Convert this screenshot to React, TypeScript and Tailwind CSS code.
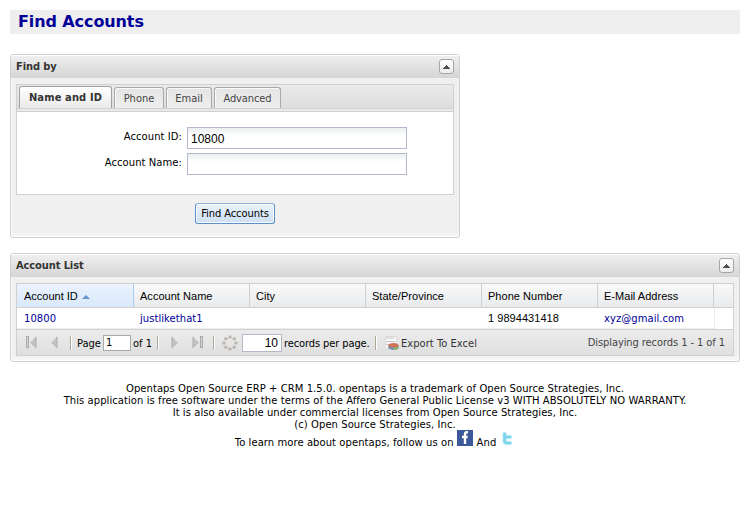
import React from 'react';

const verdana = "font-['DejaVu_Sans',sans-serif]";
const tahoma = "font-['DejaVu_Sans_Condensed','DejaVu_Sans',sans-serif] [font-stretch:condensed]";
const arial = "font-['Liberation_Sans',sans-serif]";

function Collapse() {
  return (
    <span className="flex h-[15px] w-[15px] items-center justify-center rounded-[3px] border border-[#a6a6a6] bg-gradient-to-b from-white to-[#ececec]">
      <svg width="7" height="4" viewBox="0 0 7 4" shapeRendering="crispEdges">
        <path d="M3 0h1v1h1v1h1v1h1v1H0V3h1V2h1V1h1z" fill="#505050" />
      </svg>
    </span>
  );
}

function Panel({ title, className, children }: { title: string; className: string; children: React.ReactNode }) {
  return (
    <section className={`rounded-[3px] border border-[#d0d0d0] bg-[#f0f0f0] shadow-[inset_1px_0_0_#fafafa,inset_0_-1px_0_#fff,inset_0_-4px_0_#f5f5f5] ${className}`}>
      <header className="flex h-[23px] items-center justify-between rounded-t-[2px] border-t border-white bg-gradient-to-b from-[#efefef] to-[#d5d5d5] px-[5px]">
        <h2 className={`${tahoma} text-[11px] leading-[14px] font-bold tracking-[-0.1px] whitespace-nowrap text-[#333]`}>{title}</h2>
        <span className="-mt-px"><Collapse /></span>
      </header>
      {children}
    </section>
  );
}

function Tab({ label, className }: { label: string; className: string }) {
  return (
    <div className={`flex h-[21px] items-center justify-center rounded-t-[3px] border border-b-0 border-[#a9a9a9] bg-gradient-to-b from-[#e4e4e4] to-[#eeeeee] pt-[2px] text-[11px] whitespace-nowrap text-[#444] shadow-[inset_1px_1px_0_#fafafa] ${tahoma} ${className}`}>
      {label}
    </div>
  );
}

function Field({ label, value }: { label: string; value?: string }) {
  return (
    <div className="flex h-[22px]">
      <label className={`${verdana} w-[165px] pt-[4px] text-right text-[10px] leading-[12px] tracking-[0.06px] whitespace-nowrap text-black`}>{label}</label>
      <div className={`${arial} ml-[5px] h-[22px] w-[220px] border border-[#b5b8c8] bg-gradient-to-b from-[#eceff0] to-white to-40% pl-[3px] text-[12px] leading-[22px] text-black`}>{value}</div>
    </div>
  );
}

function Separator({ className }: { className: string }) {
  return <span className={`h-[14px] w-px shrink-0 bg-[#aca899] shadow-[1px_0_0_white] ${className}`} />;
}

function PageArrow({ flip, bar, className }: { flip?: boolean; bar?: boolean; className: string }) {
  return (
    <svg className={`shrink-0 ${className}`} width="11" height="13" viewBox="0 0 11 13">
      <g transform={flip ? 'translate(11 0) scale(-1 1)' : undefined}>
        {bar && <rect x="0.5" y="0.5" width="2" height="11" fill="#d5d5d5" stroke="#a9a9a9" />}
        <path d={bar ? 'M10 .8v10.8L4.6 6.2z' : 'M8 .8v10.8L2.6 6.2z'} fill="#c4c4c4" />
        <path d={bar ? 'M10 .8v10.8L4.6 6.2' : 'M8 .8v10.8L2.6 6.2'} fill="none" stroke="#a6a6a6" strokeWidth=".9" />
      </g>
    </svg>
  );
}

const dots = [[8, 2], [12.2, 3.8], [14, 8], [12.2, 12.2], [8, 14], [3.8, 12.2], [2, 8], [3.8, 3.8]];

const columns = ['Account ID', 'Account Name', 'City', 'State/Province', 'Phone Number', 'E-Mail Address'];

export default function App() {
  return (
    <div className="h-[511px] w-[750px] overflow-hidden bg-white px-[10px] pt-[10px]">
      <h1 className={`${verdana} h-6 bg-[#eeeeee] pl-[8px] text-[16px] leading-[23px] font-bold tracking-[-0.1px] text-[#000099]`}>Find Accounts</h1>

      <Panel title="Find by" className="mt-5 h-[184px] w-[450px]">
        <div className="mx-[5px] mt-[6px] h-[111px] border border-[#d0d0d0] bg-white">
          <div className="flex h-[24px] items-end gap-[2px] border-b border-[#d0d0d0] bg-gradient-to-b from-[#eaeaea] to-[#dedede] pl-[2px]">
            <div className={`flex h-[22px] w-[93px] items-center justify-center rounded-t-[3px] border border-b-0 border-[#a0a0a0] bg-gradient-to-b from-white to-[#eaeaea] pt-[2px] text-[11px] font-bold tracking-[0.14px] whitespace-nowrap text-[#333] ${tahoma}`}>Name and ID</div>
            <Tab label="Phone" className="w-[50px]" />
            <Tab label="Email" className="w-[46px]" />
            <Tab label="Advanced" className="w-[67px] tracking-[-0.1px]" />
          </div>
          <div className="h-[3px] border-b border-[#d0d0d0] bg-[#eaeaea]" />
          <div className="flex flex-col gap-[4px] pt-[15px]">
            <Field label="Account ID:" value="10800" />
            <Field label="Account Name:" />
          </div>
        </div>
        <div className="flex justify-center pt-[8px]">
          <button className={`${tahoma} h-[21px] w-[80px] rounded-[3px] border border-[#5b8fc7] border-t-[#8ab0d8] bg-gradient-to-b from-[#e9f2fb] to-[#cde0f2] pt-px text-[11px] leading-[18px] tracking-[-0.06px] whitespace-nowrap text-black shadow-[inset_0_0_0_1px_white]`}>Find Accounts</button>
        </div>
      </Panel>

      <Panel title="Account List" className="mt-[15px] h-[109px]">
        <div className="mx-[5px] mt-[6px] h-[73px] border border-[#d0d0d0] bg-white">
          <div className={`${arial} flex h-[24px] border-b border-[#d0d0d0] bg-gradient-to-b from-[#f9f9f9] to-[#e8eaec] text-[11px] leading-[25px] text-black`}>
            {columns.map((name, i) => (
              <div key={name} className={`shrink-0 border-r whitespace-nowrap ${i === 0 ? 'w-[117px] border-[#aaccf6] bg-gradient-to-b from-[#ebf3fd] to-[#d9e8fb] pl-[7px]' : 'w-[116px] border-[#d0d0d0] pl-[6px] tracking-[0.03px]'}`}>
                {name}
                {i === 0 && (
                  <svg className="ml-[4px] inline-block align-[1px]" width="8" height="4" viewBox="0 0 8 4"><path d="M4 0l4 4H0z" fill="#6593cf" /></svg>
                )}
              </div>
            ))}
          </div>
          <div className={`${verdana} flex h-[21px] w-[698px] border-r border-b border-[#ededed] text-[10px] leading-[22px] tracking-[0.05px] text-[#000099]`}>
            <div className="w-[116px] shrink-0 pl-[7px]">10800</div>
            <div className="w-[348px] shrink-0 pl-[7px]">justlikethat1</div>
            <div className={`${arial} w-[116px] shrink-0 pl-[7px] text-[11px] leading-[21px] text-black`}>1 9894431418</div>
            <div className="shrink-0 pl-[7px]">xyz@gmail.com</div>
          </div>
          <div className={`${tahoma} flex h-[26px] items-center border-t border-[#d0d0d0] bg-gradient-to-b from-[#ececec] to-[#dfdfdf] text-[11px] leading-[14px] whitespace-nowrap text-black`}>
            <PageArrow bar className="ml-[9px]" />
            <PageArrow className="ml-[12px]" />
            <Separator className="ml-[10px]" />
            <span className="ml-[6px] w-[26px] shrink-0 pt-[2px]">Page</span>
            <span className={`${tahoma} h-[16px] w-[28px] shrink-0 border border-[#a9a9a9] bg-white pl-[2px]`}>1</span>
            <span className="ml-[2px] w-[20px] shrink-0 pt-[2px]">of 1</span>
            <Separator className="ml-[4px]" />
            <PageArrow flip className="ml-[11px]" />
            <PageArrow flip bar className="ml-[12px]" />
            <Separator className="ml-[10px]" />
            <svg className="ml-[8px] shrink-0" width="16" height="16" viewBox="0 0 16 16" fill="#bdb8b1">
              {dots.map(([x, y]) => <circle key={`${x}-${y}`} cx={x} cy={y} r="1.8" />)}
            </svg>
            <span className={`${arial} ml-[4px] h-[18px] w-[40px] shrink-0 border border-[#b5b8c8] bg-white pr-[3px] text-right text-[12px] leading-[16px]`}>10</span>
            <span className="ml-[2px] w-[86px] shrink-0 pt-[2px] tracking-[-0.1px]">records per page.</span>
            <Separator className="ml-[5px]" />
            <svg className="ml-[8px] shrink-0" width="16" height="16" viewBox="0 0 16 16">
              <path d="M1.500 1.500h11v12h-11z" fill="#f7f7f7" stroke="#dcdcdc" />
              <path d="M2 3h8M2 6.500h9M2 9.500h4" stroke="#c6c6c6" />
              <ellipse cx="9.500" cy="12" rx="5.500" ry="3" fill="#7391b8" />
              <path d="M9.500 12h5.500q0 3-5.500 3z" fill="#86b573" />
              <path d="M4 11q1-3 5.500-3t5.500 3q-2 1.500-5.500 1.500T4 11z" fill="#cf7059" />
            </svg>
            <span className="ml-px pt-[2px] tracking-[0.06px] text-[#333]">Export To Excel</span>
            <span className="mr-[8px] ml-auto tracking-[-0.07px] text-[#444]">Displaying records 1 - 1 of 1</span>
          </div>
        </div>
      </Panel>

      <footer className={`${verdana} mt-[21px] text-center text-[10px] leading-[12px] tracking-[0.066px] whitespace-nowrap text-black`}>
        <p>Opentaps Open Source ERP + CRM 1.5.0. opentaps is a trademark of Open Source Strategies, Inc.</p>
        <p>This application is free software under the terms of the Affero General Public License v3 WITH ABSOLUTELY NO WARRANTY.</p>
        <p>It is also available under commercial licenses from Open Source Strategies, Inc.</p>
        <p>(c) Open Source Strategies, Inc.</p>
        <div className="flex h-[18px] items-start justify-center pl-px">
          <span className="mt-[6px]">To learn more about opentaps, follow us on</span>
          <svg className="-mt-px ml-[3px]" width="16" height="16" viewBox="0 0 16 16">
            <path d="M0 0h16v16H0z" fill="#3b5998" />
            <path d="M11 2.300H9.800Q8 2.300 8 4.300V14M5 7h5.600" fill="none" stroke="#fff" strokeWidth="2.400" />
          </svg>
          <span className="mt-[6px] ml-[4px]">And</span>
          <svg className="-mt-px ml-[4px]" width="16" height="16" viewBox="0 0 16 16">
            <path d="M4.500 4v6.500q0 2.500 2.500 2.500h3M4.500 7H10" fill="none" stroke="#c9f0f7" strokeWidth="4.400" strokeLinecap="round" strokeLinejoin="round" />
            <path d="M4.500 4v6.500q0 2.500 2.500 2.500h3M4.500 7H10" fill="none" stroke="#7dd4ea" strokeWidth="2.600" strokeLinecap="round" strokeLinejoin="round" />
          </svg>
        </div>
      </footer>
    </div>
  );
}
